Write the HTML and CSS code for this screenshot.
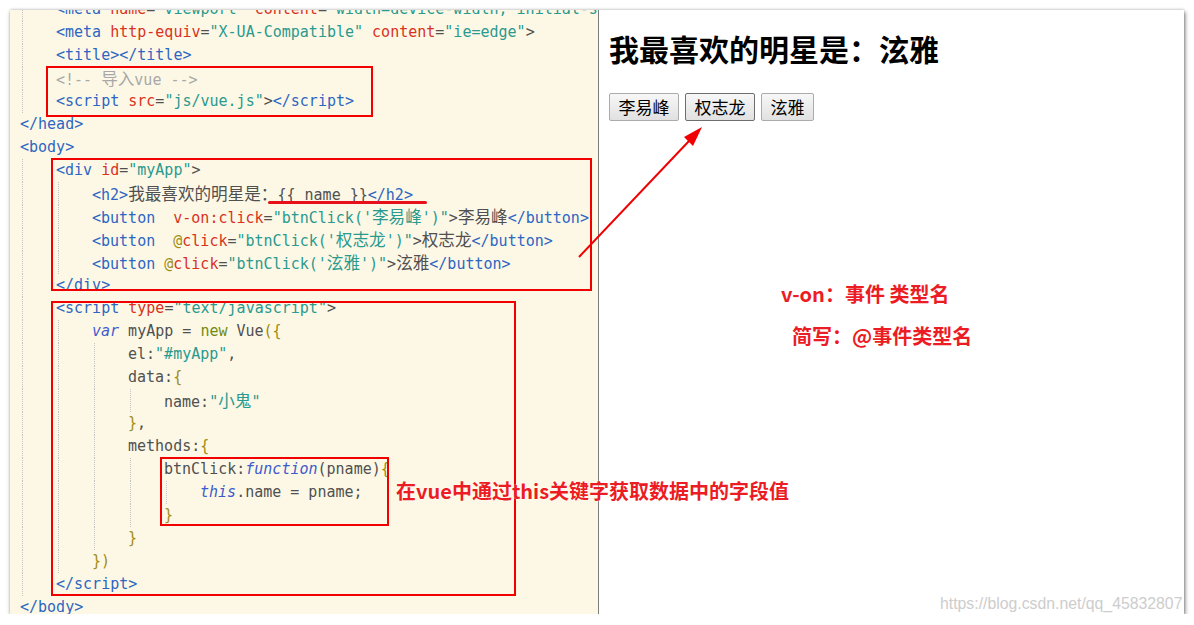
FILE: index.html
```html
<!DOCTYPE html>
<html lang="zh-CN">
<head>
  <meta charset="UTF-8">
  <title>v-on 事件绑定</title>
  <link rel="stylesheet" href="styles.css">
</head>
<body>

<div class="window">
  <!-- 左侧：编辑器 -->
  <div class="editor">
    <div class="code">
      <div class="ln"><i class="g"></i><span class="t">&lt;meta</span> <span class="a">name</span>=<span class="s">"viewport"</span> <span class="a">content</span>=<span class="s">"width=device-width, initial-scale=1.0"</span>&gt;</div>
      <div class="ln"><i class="g"></i><span class="t">&lt;meta</span> <span class="a">http-equiv</span>=<span class="s">"X-UA-Compatible"</span> <span class="a">content</span>=<span class="s">"ie=edge"</span>&gt;</div>
      <div class="ln"><i class="g"></i><span class="t">&lt;title&gt;&lt;/title&gt;</span></div>
      <div class="ln"><i class="g"></i><span class="c">&lt;!-- <span class="cn">导入</span>vue --&gt;</span></div>
      <div class="ln"><i class="g"></i><span class="t">&lt;script</span> <span class="a">src</span>=<span class="s">"js/vue.js"</span>&gt;<span class="t">&lt;/script&gt;</span></div>
      <div class="ln"><span class="t">&lt;/head&gt;</span></div>
      <div class="ln"><span class="t">&lt;body&gt;</span></div>
      <div class="ln"><i class="g"></i><span class="t">&lt;div</span> <span class="a">id</span>=<span class="s">"myApp"</span>&gt;</div>
      <div class="ln"><i class="g"></i><i class="g"></i><span class="t">&lt;h2&gt;</span><span class="cn">我最喜欢的明星是：</span>{{ name }}<span class="t">&lt;/h2&gt;</span></div>
      <div class="ln"><i class="g"></i><i class="g"></i><span class="t">&lt;button</span>  <span class="a">v-on:click</span>=<span class="s">"btnClick('<span class="cn">李易峰</span>')"</span>&gt;<span class="cn">李易峰</span><span class="t">&lt;/button&gt;</span></div>
      <div class="ln"><i class="g"></i><i class="g"></i><span class="t">&lt;button</span>  <span class="p">@</span><span class="a">click</span>=<span class="s">"btnClick('<span class="cn">权志龙</span>')"</span>&gt;<span class="cn">权志龙</span><span class="t">&lt;/button&gt;</span></div>
      <div class="ln"><i class="g"></i><i class="g"></i><span class="t">&lt;button</span> <span class="p">@</span><span class="a">click</span>=<span class="s">"btnClick('<span class="cn">泫雅</span>')"</span>&gt;<span class="cn">泫雅</span><span class="t">&lt;/button&gt;</span></div>
      <div class="ln"><i class="g"></i><span class="t">&lt;/div&gt;</span></div>
      <div class="ln"><i class="g"></i><span class="t">&lt;script</span> <span class="a">type</span>=<span class="s">"text/javascript"</span>&gt;</div>
      <div class="ln"><i class="g"></i><i class="g"></i><span class="k">var</span> myApp = <span class="n">new</span> Vue<span class="p">({</span></div>
      <div class="ln"><i class="g"></i><i class="g"></i><i class="g"></i>el:<span class="s">"#myApp"</span>,</div>
      <div class="ln"><i class="g"></i><i class="g"></i><i class="g"></i>data:<span class="p">{</span></div>
      <div class="ln"><i class="g"></i><i class="g"></i><i class="g"></i><i class="g"></i>name:<span class="s">"<span class="cn">小鬼</span>"</span></div>
      <div class="ln"><i class="g"></i><i class="g"></i><i class="g"></i><span class="p">}</span>,</div>
      <div class="ln"><i class="g"></i><i class="g"></i><i class="g"></i>methods:<span class="p">{</span></div>
      <div class="ln"><i class="g"></i><i class="g"></i><i class="g"></i><i class="g"></i>btnClick:<span class="k">function</span>(pname)<span class="p">{</span></div>
      <div class="ln"><i class="g"></i><i class="g"></i><i class="g"></i><i class="g"></i><i class="g"></i><span class="k">this</span>.name = pname;</div>
      <div class="ln"><i class="g"></i><i class="g"></i><i class="g"></i><i class="g"></i><span class="p">}</span></div>
      <div class="ln"><i class="g"></i><i class="g"></i><i class="g"></i><span class="p">}</span></div>
      <div class="ln"><i class="g"></i><i class="g"></i><span class="p">})</span></div>
      <div class="ln"><i class="g"></i><span class="t">&lt;/script&gt;</span></div>
      <div class="ln"><span class="t">&lt;/body&gt;</span></div>
    </div>
  </div>

  <div class="divider"></div>

  <!-- 右侧：运行效果 -->
  <div class="preview">
    <h2 class="star">我最喜欢的明星是：泫雅</h2>
    <div class="btns">
      <button class="btn">李易峰</button>
      <button class="btn on">权志龙</button>
      <button class="btn">泫雅</button>
    </div>
  </div>

  <!-- 标注 -->
  <div class="box box-head"></div>
  <div class="box box-div"></div>
  <div class="box box-script"></div>
  <div class="box box-fn"></div>
  <div class="underline"></div>

  <svg class="arrow" width="1174" height="604" viewBox="0 0 1174 604">
    <line x1="569" y1="247" x2="679" y2="131" stroke="#f00000" stroke-width="2"/>
    <polygon points="692,117 683,136 674,127" fill="#f00000"/>
  </svg>

  <div class="note note-von">v-on：事件 类型名</div>
  <div class="note note-at">简写：@事件类型名</div>
  <div class="note note-this">在vue中通过this关键字获取数据中的字段值</div>
  <div class="mark">https://blog.csdn.net/qq_45832807</div>
</div>

</body>
</html>
```

FILE: styles.css
```css
body {
  margin: 0;
  background: #fff;
  font-family: "Noto Sans CJK SC", sans-serif;
}
.window {
  position: relative;
  display: flex;
  width: 1174px;
  height: 604px;
  margin: 10px 0 0 10px;
  overflow: hidden;
  box-shadow: 1px 2px 4px rgba(0,0,0,0.55), 0 -1px 2px rgba(0,0,0,0.12);
}

/* 编辑器 */
.editor {
  width: 578px;
  padding-left: 10px;
  background: #fdf8e6;
  overflow: hidden;
}
.code {
  margin-top: -12px;
  font-family: "DejaVu Sans Mono", monospace;
  font-size: 15px;
  color: #505050;
}
.ln {
  height: 23px;
  line-height: 23px;
  white-space: pre;
}
.g {
  display: inline-block;
  vertical-align: top;
  width: 33px;
  height: 23px;
  margin-left: 2px;
  border-left: 1px dotted #c4c4c4;
}
.t { color: #2d66c2; }
.a { color: #d8321e; }
.s { color: #2a9a8e; }
.c { color: #a8a8a8; }
.k { color: #3d5bcc; font-style: italic; }
.n { color: #6f8b12; }
.p { color: #a08c12; }
.cn {
  font-family: "Noto Sans CJK SC", sans-serif;
  font-size: 16.6px;
}

.divider {
  width: 1px;
  background: #7d7d7d;
}

/* 预览 */
.preview {
  flex: 1;
  padding: 23px 0 0 10px;
  background: #fff;
}
.star {
  margin: 0 0 30px;
  font-size: 30px;
  line-height: 30px;
  font-weight: bold;
  color: #000;
}
.btns {
  display: flex;
  gap: 6px;
}
.btn {
  font-family: "Noto Sans CJK SC", sans-serif;
  font-size: 17px;
  line-height: 24px;
  padding: 1px 8.5px;
  color: #000;
  background: linear-gradient(#f7f7f7, #e1e1e1);
  border: 1px solid #ababab;
  border-radius: 2px;
}
.btn.on {
  border-color: #6e6e6e;
}

/* 标注 */
.box {
  position: absolute;
  border: 2px solid #f20000;
  box-sizing: border-box;
}
.box-head { left: 36px; top: 56px; width: 327px; height: 51px; }
.box-div { left: 41px; top: 148px; width: 541px; height: 133px; }
.box-script { left: 41px; top: 291px; width: 465px; height: 295px; }
.box-fn { left: 150px; top: 447px; width: 229px; height: 69px; }

.underline {
  position: absolute;
  left: 258px;
  top: 191px;
  width: 159px;
  height: 3px;
  border-radius: 2px;
  background: #e8101a;
}
.arrow {
  position: absolute;
  left: 0;
  top: 0;
  pointer-events: none;
}
.note {
  position: absolute;
  font-weight: bold;
  line-height: 1;
  color: #ec1c24;
  white-space: nowrap;
  text-shadow: 0 0 2px #fff;
}
.note-von { left: 771px; top: 274px; font-size: 20px; }
.note-at { left: 782px; top: 316px; font-size: 20px; }
.note-this { left: 386px; top: 471px; font-size: 20px; }

.mark {
  position: absolute;
  left: 930px;
  top: 586px;
  font-family: "Liberation Sans", sans-serif;
  font-size: 15.8px;
  line-height: 1;
  color: #cdcdcd;
  white-space: nowrap;
}
```
